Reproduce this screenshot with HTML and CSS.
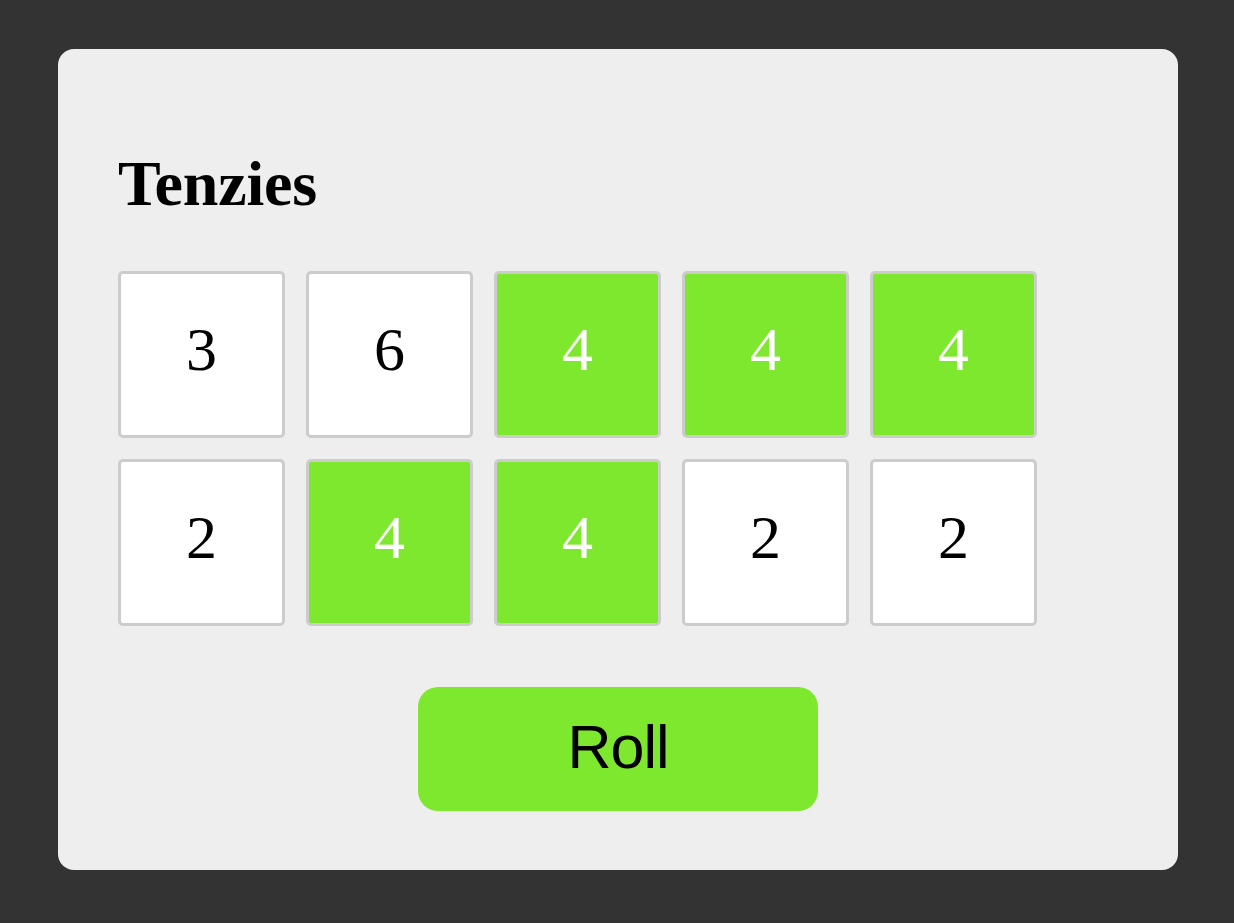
FILE: index.html
```html
<!DOCTYPE html>
<html lang="en">
<head>
<meta charset="utf-8">
<title>Tenzies</title>
<link rel="stylesheet" href="styles.css">
</head>
<body>
<main class="card">
  <h1 class="title">Tenzies</h1>
  <div class="dice">
    <button class="die">3</button>
    <button class="die">6</button>
    <button class="die held">4</button>
    <button class="die held">4</button>
    <button class="die held">4</button>
    <button class="die">2</button>
    <button class="die held">4</button>
    <button class="die held">4</button>
    <button class="die">2</button>
    <button class="die">2</button>
  </div>
  <div class="actions">
    <button class="roll">Roll</button>
  </div>
</main>
</body>
</html>
```
FILE: styles.css
```css
html, body {
  margin: 0;
  padding: 0;
  background: #333333;
}

body {
  padding: 49px 56px 53px 58px;
}

.card {
  box-sizing: border-box;
  height: 821px;
  background: #eeeeee;
  border-radius: 16px;
  padding: 103px 60px 59px 60px;
  display: flex;
  flex-direction: column;
}

.title {
  margin: 0;
  font-family: "Liberation Serif", "Times New Roman", serif;
  font-weight: bold;
  font-size: 64px;
  line-height: 64px;
  letter-spacing: -0.2px;
  color: #000;
}

.dice {
  margin-top: 55px;
  display: grid;
  grid-template-columns: repeat(5, 167px);
  grid-auto-rows: 167px;
  gap: 21px;
}

.die {
  box-sizing: border-box;
  margin: 0;
  padding: 0 0 10px 0;
  border: 3px solid #cccccc;
  border-radius: 5px;
  background: #ffffff;
  color: #000000;
  font-family: "Liberation Serif", "Times New Roman", serif;
  font-size: 62px;
  display: flex;
  align-items: center;
  justify-content: center;
}

.die.held {
  background: #7ee82f;
  color: #ffffff;
}

.actions {
  margin-top: 61px;
  display: flex;
  justify-content: center;
}

.roll {
  width: 400px;
  height: 124px;
  border: none;
  border-radius: 20px;
  background: #7ee82f;
  color: #000000;
  font-family: "Liberation Sans", Arial, sans-serif;
  font-size: 61px;
  letter-spacing: -1px;
  padding: 0 0 4px 0;
}
```
